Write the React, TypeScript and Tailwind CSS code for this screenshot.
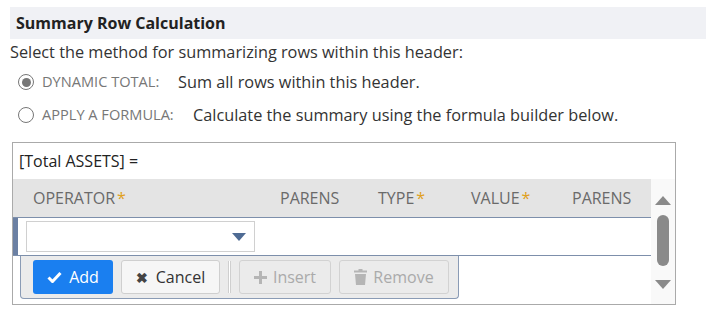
const SortUp = () => (
  <svg width="16" height="9" viewBox="0 0 16 9">
    <path d="M8 0 L16 9 L0 9 Z" fill="#8a8a8a" />
  </svg>
);

const SortDown = () => (
  <svg width="16" height="9" viewBox="0 0 16 9">
    <path d="M0 0 L16 0 L8 9 Z" fill="#8a8a8a" />
  </svg>
);

const Radio = ({ checked }: { checked?: boolean }) => (
  <span className="w-[16px] h-[16px] rounded-full border border-[#777] bg-white flex items-center justify-center">
    {checked && <span className="w-[9px] h-[9px] rounded-full bg-[#777]" />}
  </span>
);

const App = () => {
  return (
    <div className="w-[706px] h-[317px] bg-white text-[#333] overflow-hidden" style={{ fontFamily: '"Open Sans", "Noto Sans", sans-serif' }}>
      {/* Section title */}
      <div className="ml-[10px] mt-[7px] h-[32px] bg-[#f0f1f5] pl-[6px] flex items-center">
        <h2 className="text-[16px] font-bold text-[#222]">Summary Row Calculation</h2>
      </div>

      <p className="pl-[10px] mt-[2px] text-[16.3px] leading-[22px]">Select the method for summarizing rows within this header:</p>

      {/* Radio options */}
      <div className="pl-[18px] mt-[8px] flex flex-col gap-[11px]">
        <div className="flex items-center h-[22px]">
          <Radio checked />
          <span className="ml-[8px] w-[136px] text-[14.6px] text-[#777] uppercase">Dynamic Total:</span>
          <span className="text-[16.3px]">Sum all rows within this header.</span>
        </div>
        <div className="flex items-center h-[22px]">
          <Radio />
          <span className="ml-[8px] w-[151px] text-[14.6px] text-[#777] uppercase">Apply a Formula:</span>
          <span className="text-[16.3px]">Calculate the summary using the formula builder below.</span>
        </div>
      </div>

      {/* Formula builder */}
      <div className="ml-[12px] mt-[16px] w-[664px] h-[163px] border border-[#aaa] flex flex-col">
        <div className="h-[36px] pl-[6px] flex items-center text-[16px] text-[#222]">[Total ASSETS] =</div>

        <div className="flex flex-1">
          <div className="w-[638px] flex flex-col">
            {/* Column headers */}
            <div className="h-[39px] bg-[#e4e4e4] border-b border-[#7d8fab] flex items-center text-[16px] text-[#6a6a6a]">
              <div className="w-[267px] pl-[20px]">OPERATOR<span className="text-[#e0a020] ml-[2px]">*</span></div>
              <div className="w-[98px]">PARENS</div>
              <div className="w-[93px]">TYPE<span className="text-[#e0a020] ml-[2px]">*</span></div>
              <div className="w-[101px]">VALUE<span className="text-[#e0a020] ml-[2px]">*</span></div>
              <div>PARENS</div>
            </div>

            {/* Edit row */}
            <div className="h-[38px] border-b border-[#7d8fab] flex">
              <div className="w-[5px] bg-[#6b80a3]" />
              <div className="ml-[8px] mt-[3px] w-[229px] h-[31px] border border-[#d0d0d0] bg-white flex items-center justify-end pr-[8px]">
                <svg width="14" height="8" viewBox="0 0 14 8">
                  <path d="M0 0 L14 0 L7 8 Z" fill="#4f6b94" />
                </svg>
              </div>
            </div>

            {/* Row toolbar */}
            <div className="ml-[7px] w-[439px] h-[43px] bg-[#ebebeb] border border-t-0 border-[#8a9bb5] rounded-b-[4px] flex items-center pl-[12px] gap-[8px]">
              <button className="w-[80px] h-[34px] bg-[#1a7ff0] rounded-[3px] text-white text-[16px] flex items-center justify-center gap-[7px]">
                <svg width="15" height="12" viewBox="0 0 15 12">
                  <path d="M1.5 6.5 L5.5 10.5 L13.5 2" stroke="white" strokeWidth="3" fill="none" />
                </svg>
                Add
              </button>
              <button className="w-[99px] h-[34px] bg-[#f6f6f6] border border-[#cfcfcf] rounded-[3px] text-[#333] text-[16px] flex items-center justify-center gap-[8px]">
                <span className="text-[14px] text-[#444] font-bold">✖</span>
                Cancel
              </button>
              <div className="h-[32px] w-[3px] border-l border-r border-[#cfcfcf] bg-white" />
              <button className="w-[92px] h-[34px] bg-[#ebebeb] border border-[#d2d2d2] rounded-[3px] text-[#aaa] text-[16px] flex items-center justify-center gap-[6px]">
                <svg width="13" height="13" viewBox="0 0 13 13">
                  <path d="M5 0 H8 V5 H13 V8 H8 V13 H5 V8 H0 V5 H5 Z" fill="#b5b5b5" />
                </svg>
                Insert
              </button>
              <button className="w-[110px] h-[34px] bg-[#ebebeb] border border-[#d2d2d2] rounded-[3px] text-[#aaa] text-[16px] flex items-center justify-center gap-[6px]">
                <svg width="13" height="16" viewBox="0 0 13 16">
                  <path d="M4.5 0 H8.5 V1.5 H13 V3.5 H0 V1.5 H4.5 Z M1 5 H12 L11 16 H2 Z" fill="#b5b5b5" />
                </svg>
                Remove
              </button>
            </div>
          </div>

          {/* Scrollbar */}
          <div className="flex-1 bg-[#f9f9f9] flex flex-col items-center pt-[17px]">
            <SortUp />
            <div className="mt-[10px] w-[12px] h-[51px] rounded-full bg-[#8a8a8a]" />
            <div className="mt-[14px]">
              <SortDown />
            </div>
          </div>
        </div>
      </div>
    </div>
  );
};

export default App;
